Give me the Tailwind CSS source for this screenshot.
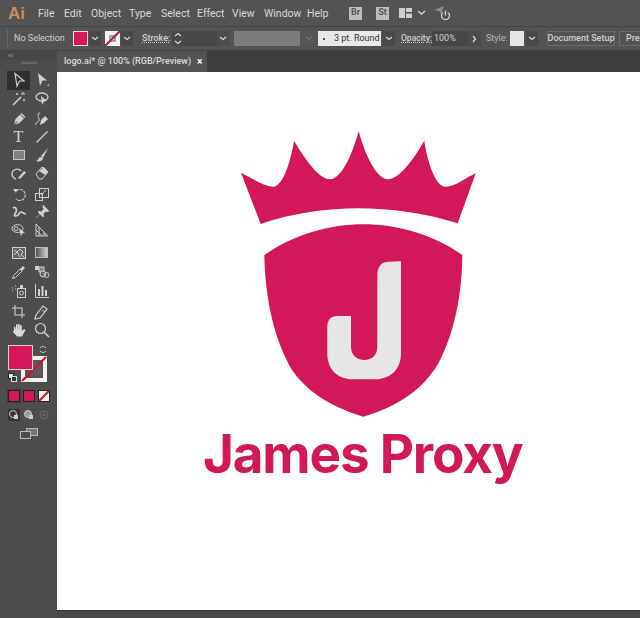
<!doctype html>
<html><head><meta charset="utf-8"><script src="https://cdn.jsdelivr.net/npm/@tailwindcss/browser@4"></script></head>
<body class="m-0 w-[640px] h-[618px] overflow-hidden bg-[#535353] font-['Roboto',sans-serif] text-[#d4d4d4]">
<div class="flex flex-col h-[618px]">
  <!-- menu bar -->
  <div class="h-[26px] flex items-center bg-[#535353] shrink-0">
    <span class="ml-[8px] w-[17px] text-[17px] leading-none font-semibold text-[#c98d5e] font-['Liberation_Sans',sans-serif]">Ai</span>
    <nav class="flex text-[10.5px] ml-[13px] pt-[1px] text-[#d8d8d8]">
      <span class="w-[26px]">File</span><span class="w-[27px]">Edit</span><span class="w-[38px]">Object</span><span class="w-[32px]">Type</span><span class="w-[36px]">Select</span><span class="w-[35px]">Effect</span><span class="w-[32px]">View</span><span class="w-[43px]">Window</span><span class="w-[30px]">Help</span>
    </nav>
    <span class="ml-[12px] w-[13px] h-[13px] bg-[#bdbdbd] text-[#555] text-[9px] font-bold flex items-center justify-center">Br</span>
    <span class="ml-[14px] w-[13px] h-[13px] bg-[#bdbdbd] text-[#555] text-[9px] font-bold flex items-center justify-center">St</span>
    <svg class="ml-[10px]" width="14" height="10" viewBox="0 0 14 10"><path d="M0 0h6v10H0zM7 0h6v4H7zM7 5.500h6v4.500H7z" fill="#cfcfcf"/></svg>
    <svg class="ml-[4px]" width="9" height="6" viewBox="0 0 9 6"><path d="M1 1l3.500 3L8 1" fill="none" stroke="#d0d0d0" stroke-width="1.500"/></svg>
    <svg class="ml-[8px]" width="17" height="16" viewBox="0 0 17 16"><path d="M0 5l10-4-3 8-2-3z" fill="#8a8a8a"/><path d="M9 7.500a4 4 0 1 0 5 0M11.500 5.500v5" fill="none" stroke="#cfcfcf" stroke-width="1.300"/></svg>
  </div>
  <!-- control bar -->
  <div class="h-[25px] flex items-center bg-[#535353] border-y border-[#444] shrink-0 text-[9px] text-[#cfcfcf] overflow-hidden *:shrink-0">
    <span class="ml-[7px] w-px h-[17px] bg-[#6a6a6a]"></span>
    <span class="ml-[6px] w-[59px]">No Selection</span>
    <span class="w-[15px] h-[15px] bg-[#d3175b] border border-[#ddd]"></span>
    <span class="ml-[1px] w-[12px] h-[15px] bg-[#484848] flex items-center justify-center"><svg width="8" height="5" viewBox="0 0 8 5"><path d="M1 1l3 2.500L7 1" fill="none" stroke="#ddd" stroke-width="1.200"/></svg></span>
    <svg class="ml-[4px]" width="15" height="15" viewBox="0 0 15 15"><rect width="15" height="15" fill="#f2f2f2"/><path d="M0 15L15 0" stroke="#c8142c" stroke-width="2"/><rect x="5" y="5" width="5" height="5" fill="none" stroke="#555"/></svg>
    <span class="ml-[1px] w-[12px] h-[15px] bg-[#484848] flex items-center justify-center"><svg width="8" height="5" viewBox="0 0 8 5"><path d="M1 1l3 2.500L7 1" fill="none" stroke="#ddd" stroke-width="1.200"/></svg></span>
    <span class="ml-[9px] w-[25px] font-medium underline decoration-dotted">Stroke:</span>
    <span class="ml-[5px] w-[12px] h-[15px] bg-[#484848] flex items-center justify-center"><svg width="8" height="13" viewBox="0 0 8 13"><path d="M1 4l3-2.500L7 4M1 9l3 2.500L7 9" fill="none" stroke="#ddd" stroke-width="1.100"/></svg></span>
    <span class="w-[33px] h-[15px] bg-[#464646]"></span>
    <span class="w-[12px] h-[15px] bg-[#4c4c4c] flex items-center justify-center"><svg width="8" height="5" viewBox="0 0 8 5"><path d="M1 1l3 2.500L7 1" fill="none" stroke="#ddd" stroke-width="1.200"/></svg></span>
    <span class="ml-[5px] w-[66px] h-[15px] bg-[#7b7b7b]"></span>
    <span class="ml-[2px] w-[14px] h-[15px] bg-[#565656] flex items-center justify-center"><svg width="8" height="5" viewBox="0 0 8 5"><path d="M1 1l3 2.500L7 1" fill="none" stroke="#707070" stroke-width="1.200"/></svg></span>
    <span class="ml-[2px] w-[63px] h-[15px] bg-[#e8e8e8] text-[#333] flex items-center pl-[5px] gap-[9px] whitespace-nowrap"><i class="w-[2px] h-[2px] rounded-full bg-[#222] shrink-0"></i><span>3 pt. Round</span></span>
    <span class="ml-[2px] w-[12px] h-[15px] bg-[#484848] flex items-center justify-center"><svg width="8" height="5" viewBox="0 0 8 5"><path d="M1 1l3 2.500L7 1" fill="none" stroke="#ddd" stroke-width="1.200"/></svg></span>
    <span class="ml-[6px] w-[28px] font-medium underline decoration-dotted whitespace-nowrap text-[8.500px]">Opacity:</span>
    <span class="ml-[3px] w-[36px] h-[15px] bg-[#464646] flex items-center pl-[2px]">100%</span>
    <span class="w-[13px] h-[15px] bg-[#4c4c4c] flex items-center justify-center"><svg width="5" height="8" viewBox="0 0 5 8"><path d="M1 1l2.500 3L1 7" fill="none" stroke="#ddd" stroke-width="1.200"/></svg></span>
    <span class="ml-[5px] w-[24px] text-[#b8b8b8]">Style:</span>
    <span class="w-[14px] h-[15px] bg-[#e6e6e6]"></span>
    <span class="ml-[2px] w-[12px] h-[15px] bg-[#484848] flex items-center justify-center"><svg width="8" height="5" viewBox="0 0 8 5"><path d="M1 1l3 2.500L7 1" fill="none" stroke="#ddd" stroke-width="1.200"/></svg></span>
    <span class="ml-[9px] w-[68px] h-[15px] border border-[#6b6b6b] flex items-center justify-center font-medium whitespace-nowrap">Document Setup</span>
    <span class="ml-[4px] w-[60px] h-[15px] border border-[#6b6b6b] flex items-center pl-[6px] font-medium">Preferences</span>
  </div>
  <div class="flex flex-1 min-h-0">
    <!-- tools -->
    <aside class="w-[57px] shrink-0 bg-[#4d4d4d] flex flex-col">
      <div class="h-[9px] bg-[#484848] text-[8px] leading-[9px] pl-[8px] text-[#bbb]">‹‹</div>
      <div class="mx-[6px] h-[11px] flex justify-center pt-[2px]"><span class="w-[16px] h-[2px] bg-[#666]"></span></div>
      <div class="grid grid-cols-[23px_23px] ml-[7px] auto-rows-[18.500px] text-[#cfcfcf]">
        <span class="flex items-center justify-center bg-[#2f2f2f]"><svg width="16" height="16" viewBox="0 0 16 16"><path d="M4 1.500l9 7.500H8.500L6 14z" fill="none" stroke="#d0d0d0" stroke-width="1.200"/></svg></span>
        <span class="flex items-center justify-center"><svg width="16" height="16" viewBox="0 0 16 16"><path d="M4 1l9 7.500H8.500L6 14z" fill="#cfcfcf"/><path d="M13 14l2 0 0-2z" fill="#ccc"/></svg></span>
        <span class="flex items-center justify-center"><svg width="16" height="16" viewBox="0 0 16 16"><path d="M2 14L10 6" stroke="#d0d0d0" stroke-width="1.600"/><path d="M12 1v2M10 3h4M6 2v2M5 3h2M13 8v2M12 9h2" stroke="#d0d0d0"/></svg></span>
        <span class="flex items-center justify-center"><svg width="16" height="16" viewBox="0 0 16 16"><ellipse cx="8" cy="6" rx="6" ry="4" fill="none" stroke="#d0d0d0" stroke-width="1.300"/><path d="M7 5l6 5-3 .500L8 14z" fill="#d0d0d0"/></svg></span>
      </div>
      <div class="grid grid-cols-[23px_23px] ml-[7px] auto-rows-[18px] mt-[2px]">
        <span class="flex items-center justify-center"><svg width="16" height="16" viewBox="0 0 16 16"><path d="M3 14l1.500-6L9 3.500l4 4L8.500 12z" fill="#d0d0d0"/><path d="M3 14l3.500-3.500" stroke="#4d4d4d"/><path d="M10 2.500l4 4" stroke="#d0d0d0" stroke-width="1.500"/></svg></span>
        <span class="flex items-center justify-center"><svg width="16" height="16" viewBox="0 0 16 16"><path d="M2 14c-1-4 4-2 3-6s-2-6 1-6" fill="none" stroke="#d0d0d0"/><path d="M6 14l1-5 4-4 3 3-4 4z" fill="#d0d0d0"/></svg></span>
        <span class="flex items-center justify-center text-[16px] leading-none font-['Liberation_Serif',serif] text-[#d4d4d4]">T</span>
        <span class="flex items-center justify-center"><svg width="16" height="16" viewBox="0 0 16 16"><path d="M2.500 13.500l11-11" stroke="#d0d0d0" stroke-width="1.200"/></svg></span>
        <span class="flex items-center justify-center"><svg width="16" height="16" viewBox="0 0 16 16"><rect x="2.500" y="3.500" width="11" height="9" fill="#808080" stroke="#c8c8c8"/></svg></span>
        <span class="flex items-center justify-center"><svg width="16" height="16" viewBox="0 0 16 16"><path d="M14 1L7 9l2 2z" fill="#d0d0d0"/><path d="M7 10c-3 0-2 3-5 4 3 1 7 0 7-3z" fill="#d0d0d0"/></svg></span>
        <span class="flex items-center justify-center"><svg width="16" height="16" viewBox="0 0 16 16"><path d="M9 5a5 5 0 1 0-5 8" fill="none" stroke="#d0d0d0" stroke-width="1.400" transform="translate(1 1)"/><path d="M7 13l6-7 2 1.500-6 6.500z" fill="#d0d0d0"/></svg></span>
        <span class="flex items-center justify-center"><svg width="16" height="16" viewBox="0 0 16 16"><path d="M2 9l6-7 6 5-6 7H5z" fill="none" stroke="#d0d0d0"/><path d="M5 6l5-4 4 5-3 3z" fill="#d0d0d0"/></svg></span>
      </div>
      <div class="grid grid-cols-[23px_23px] ml-[7px] auto-rows-[18px] mt-[3px]">
        <span class="flex items-center justify-center"><svg width="16" height="16" viewBox="0 0 16 16"><path d="M5 5a5.500 5.500 0 1 1 0 8" fill="none" stroke="#d0d0d0" stroke-width="1.200" stroke-dasharray="3 1"/><path d="M2 3l4 0-1 4z" fill="#d0d0d0"/></svg></span>
        <span class="flex items-center justify-center"><svg width="16" height="16" viewBox="0 0 16 16"><rect x="1.500" y="7.500" width="7" height="7" fill="none" stroke="#d0d0d0"/><rect x="5.500" y="2.500" width="9" height="9" fill="none" stroke="#d0d0d0"/><path d="M7 9l5-5" stroke="#d0d0d0"/></svg></span>
        <span class="flex items-center justify-center"><svg width="16" height="16" viewBox="0 0 16 16"><path d="M2 4c3-2 4 2 3 4s-3 4 0 4 3-4 5-4 3 2 5 2" fill="none" stroke="#d0d0d0" stroke-width="1.700"/></svg></span>
        <span class="flex items-center justify-center"><svg width="16" height="16" viewBox="0 0 16 16"><path d="M9 1l6 6-2 1-1-1-3 3 1 2-1 1-5-5 1-1 2 1 3-3-1-1zM6 10l-4 4" fill="#d0d0d0" stroke="#d0d0d0" stroke-width=".6"/></svg></span>
        <span class="flex items-center justify-center"><svg width="16" height="16" viewBox="0 0 16 16"><ellipse cx="6.500" cy="6.500" rx="5.500" ry="4" fill="none" stroke="#d0d0d0"/><circle cx="5" cy="6.500" r="2" fill="none" stroke="#d0d0d0"/><path d="M8 6l6 5-3 .500-1 3z" fill="#d0d0d0"/></svg></span>
        <span class="flex items-center justify-center"><svg width="16" height="16" viewBox="0 0 16 16"><path d="M2 2v12h12zM2 8l6 6M5 5v9" fill="none" stroke="#d0d0d0"/><path d="M9 10l5 4H8z" fill="#999"/></svg></span>
      </div>
      <div class="grid grid-cols-[23px_23px] ml-[7px] auto-rows-[19px] mt-[4px]">
        <span class="flex items-center justify-center"><svg width="16" height="14" viewBox="0 0 16 14"><rect x="1.500" y="1.500" width="13" height="11" fill="#666" stroke="#d0d0d0"/><path d="M3 4l3 2 3-3 3 3-2 3 3 2M3 9l3-3 3 5" fill="none" stroke="#d0d0d0"/></svg></span>
        <span class="flex items-center justify-center"><span class="w-[13px] h-[11px] bg-gradient-to-r from-[#555] to-[#d0d0d0] border border-[#bbb]"></span></span>
        <span class="flex items-center justify-center"><svg width="16" height="16" viewBox="0 0 16 16"><path d="M1.500 14.500l1-3L9 5l2 2-6.500 6.500z" fill="none" stroke="#d0d0d0"/><path d="M9 5l3-3 2 2-3 3z" fill="#d0d0d0"/></svg></span>
        <span class="flex items-center justify-center"><svg width="16" height="16" viewBox="0 0 16 16"><rect x="1" y="2" width="4" height="4" fill="#d0d0d0"/><rect x="5" y="3" width="5" height="5" fill="#888" stroke="#ccc"/><circle cx="9" cy="10" r="3" fill="#666" stroke="#ccc"/><circle cx="12.500" cy="11" r="2.500" fill="none" stroke="#ccc"/></svg></span>
        <span class="flex items-center justify-center"><svg width="16" height="16" viewBox="0 0 16 16"><path d="M1 5h1M1 8h1M4 3h1M4 6h1" stroke="#d0d0d0"/><rect x="6.500" y="5.500" width="8" height="9" fill="none" stroke="#d0d0d0"/><circle cx="10.500" cy="10" r="2" fill="none" stroke="#d0d0d0"/><rect x="9" y="2" width="3" height="3" fill="#d0d0d0"/></svg></span>
        <span class="flex items-center justify-center"><svg width="16" height="16" viewBox="0 0 16 16"><path d="M1.500 1v13.500H15" fill="none" stroke="#d0d0d0"/><path d="M4 13V6h2v7zM7.500 13V3h2v10zM11 13V7h2v6z" fill="#d0d0d0"/></svg></span>
      </div>
      <div class="grid grid-cols-[23px_23px] ml-[7px] auto-rows-[18px] mt-[3px]">
        <span class="flex items-center justify-center"><svg width="16" height="16" viewBox="0 0 16 16"><path d="M4 1v10h10M1 4h10v10" fill="none" stroke="#d0d0d0" stroke-width="1.100"/></svg></span>
        <span class="flex items-center justify-center"><svg width="16" height="16" viewBox="0 0 16 16"><path d="M1 15l1-4 7-9 4 3-7 9z" fill="none" stroke="#d0d0d0" stroke-width="1.200"/><path d="M8 6l3 2" stroke="#d0d0d0"/></svg></span>
        <span class="flex items-center justify-center"><svg width="16" height="16" viewBox="0 0 16 16"><path d="M3 8V5l1-.500L5 8V2.500l1.500-.500L7 8V2h1.500L9 8V3l1.500 0L11 9l2-2 1.500 1-3.500 6.500H6L2 10z" fill="#d8d8d8"/></svg></span>
        <span class="flex items-center justify-center"><svg width="16" height="16" viewBox="0 0 16 16"><circle cx="6.500" cy="6.500" r="5" fill="none" stroke="#d0d0d0" stroke-width="1.200"/><path d="M10 10l5 5" stroke="#d0d0d0" stroke-width="1.500"/></svg></span>
      </div>
      <!-- fill / stroke -->
      <div class="relative mt-[6px] h-[41px] w-[57px] shrink-0">
        <div class="absolute left-[21px] top-[11px] w-[26px] h-[26px]"><svg width="26" height="26" viewBox="0 0 26 26"><rect x="2" y="2" width="22" height="22" fill="#6a4a52" stroke="#f2f2f2" stroke-width="4"/><rect x="6" y="6" width="14" height="14" fill="#5c5c5c"/><path d="M1 25L25 1" stroke="#c8142c" stroke-width="2.200"/></svg></div>
        <div class="absolute left-[8px] top-0 w-[25px] h-[25px] bg-[#d3175b] border border-[#dcc]"></div>
        <svg class="absolute left-[38px] top-0" width="10" height="9" viewBox="0 0 10 9"><path d="M2 3c1-2 4-2 6 0M8 6c-1 2-4 2-6 0" fill="none" stroke="#cfcfcf"/></svg>
        <div class="absolute left-[8px] top-[28px] w-[10px] h-[10px]"><span class="absolute left-0 top-0 w-[6px] h-[6px] bg-[#eee] border border-[#222]"></span><span class="absolute left-[3px] top-[3px] w-[6px] h-[6px] bg-[#333] border border-[#ddd]"></span></div>
      </div>
      <div class="flex ml-[8px] mt-[4px] gap-[3px] h-[14px]">
        <span class="w-[12px] h-[12px] bg-[#d3175b] border border-[#222] outline outline-[#3d3d3d]"></span>
        <span class="w-[12px] h-[12px] bg-[#d3175b] border border-[#222]"></span>
        <svg width="12" height="12" viewBox="0 0 12 12"><rect x=".5" y=".5" width="11" height="11" fill="#f2f2f2" stroke="#222"/><path d="M1 11L11 1" stroke="#c8142c" stroke-width="2"/></svg>
      </div>
      <div class="flex ml-[8px] mt-[5px] gap-[3px] h-[12px]">
        <svg width="12" height="12" viewBox="0 0 12 12"><rect width="12" height="12" fill="#333"/><circle cx="5" cy="5" r="3.500" fill="none" stroke="#ccc"/><rect x="6" y="6" width="4" height="4" fill="#ccc"/></svg>
        <svg width="12" height="12" viewBox="0 0 12 12"><circle cx="5" cy="5" r="3.500" fill="#999" stroke="#ccc"/><rect x="6" y="6" width="4" height="4" fill="#ccc"/></svg>
        <svg width="12" height="12" viewBox="0 0 12 12"><circle cx="6" cy="6" r="4" fill="none" stroke="#6a6a6a"/><circle cx="6" cy="6" r="1.500" fill="#666"/></svg>
      </div>
      <div class="flex justify-center mt-[7px]"><svg width="18" height="11" viewBox="0 0 18 11"><rect x="6.500" y=".5" width="11" height="7" fill="#777" stroke="#bbb"/><rect x=".5" y="3.500" width="10" height="7" fill="#4d4d4d" stroke="#bbb"/></svg></div>
    </aside>
    <!-- document -->
    <main class="flex-1 flex flex-col min-w-0">
      <div class="h-[21px] bg-[#3d3d3d] flex shrink-0">
        <div class="w-[150px] bg-[#535353] flex items-center pl-[7px] text-[9px] font-medium text-[#dcdcdc] whitespace-nowrap">
          <span class="w-[133px] shrink-0">logo.ai* @ 100% (RGB/Preview)</span><span class="text-[10px] font-bold text-white">×</span>
        </div>
      </div>
      <div class="relative h-[538px] bg-white shrink-0">
        <svg class="absolute left-0 top-0" width="583" height="538" viewBox="57 72 583 538">
          <path fill="#d3175b" d="M241 172.700C252 178 263 186 273 186.700C283 187 291 160 294 141C304 157 318 179 330 179.300C342 179 353 152 358.700 131C364 152 376 179 388 179.300C400 179 415 157 424.300 140.700C427 160 435 186 445 186.700C455 187 465 178 475.700 173.300L457.700 223.300C425 213 390 208.300 358.700 208.300C327 208.300 293 213 260.700 224Z"/>
          <path fill="#d3175b" d="M264.300 255C295 234 330 224.300 363.300 224.300C397 224.300 432 234 462.300 255C462 290 456 330 438 364C420 394 392 408 363.300 416.700C335 408 307 394 290 366.700C271 332 265 290 264.300 255Z"/>
          <path fill="#e6e6e6" d="M401 261.300V353.300C401 370 390 379.300 375 379.300H353.300C337 379.300 327.300 369 327.300 353.300V326.700C327.300 320 331 316 337.300 316H351V347C351 355 357 360 364.300 360C372 360 377.300 355 377.300 347V275C377.300 266 382 261.700 389 261.700Z"/>
        </svg>
        <div class="absolute left-[146px] top-[350px] text-[#d3175b] text-[53px] leading-[64px] font-bold font-['Inter',sans-serif] whitespace-nowrap tracking-[-1.200px]">James Proxy</div>
      </div>
      <div class="flex-1 bg-[#4a4a4a] border-t border-[#333]"></div>
    </main>
  </div>
</div>
</body></html>
